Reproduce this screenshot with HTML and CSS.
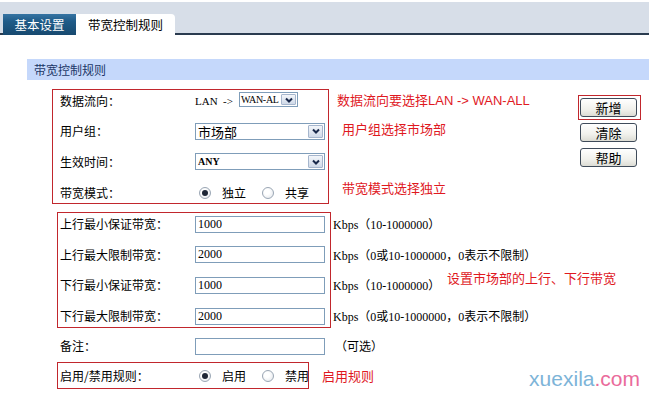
FILE: index.html
```html
<!DOCTYPE html>
<html lang="zh-cn">
<head>
  <meta charset="UTF-8">
  <title>带宽控制规则</title>
  <link rel="stylesheet" href="styles.css">
</head>
<body>

  <div class="topbar">
    <span class="tab tab-dark">基本设置</span>
    <span class="tab tab-active">带宽控制规则</span>
  </div>

  <div class="section-title">带宽控制规则</div>

  <div class="main">
    <div class="form">

      <div class="box box-a">
        <div class="row">
          <span class="label">数据流向：</span>
          <span class="lan">LAN&nbsp;&nbsp;-&gt;</span>
          <span class="select select-small">
            <span class="sel-text latin">WAN-AL</span>
            <span class="arrow"><svg viewBox="0 0 10 10"><path d="M2 3.5 L5 6.5 L8 3.5"/></svg></span>
          </span>
        </div>
        <div class="row">
          <span class="label">用户组：</span>
          <span class="select">
            <span class="sel-text big">市场部</span>
            <span class="arrow"><svg viewBox="0 0 10 10"><path d="M2 3.5 L5 6.5 L8 3.5"/></svg></span>
          </span>
        </div>
        <div class="row">
          <span class="label">生效时间：</span>
          <span class="select">
            <span class="sel-text latin small">ANY</span>
            <span class="arrow"><svg viewBox="0 0 10 10"><path d="M2 3.5 L5 6.5 L8 3.5"/></svg></span>
          </span>
        </div>
        <div class="row">
          <span class="label">带宽模式：</span>
          <span class="radio checked"></span><span class="radio-text">独立</span>
          <span class="radio second"></span><span class="radio-text">共享</span>
        </div>
      </div>

      <div class="box box-b">
        <div class="row row-b">
          <span class="label">上行最小保证带宽：</span>
          <span class="input latin">1000</span>
          <span class="unit">Kbps（10-1000000）</span>
        </div>
        <div class="row row-b">
          <span class="label">上行最大限制带宽：</span>
          <span class="input latin">2000</span>
          <span class="unit">Kbps（0或10-1000000，0表示不限制）</span>
        </div>
        <div class="row row-b">
          <span class="label">下行最小保证带宽：</span>
          <span class="input latin">1000</span>
          <span class="unit">Kbps（10-1000000）</span>
        </div>
        <div class="row row-b">
          <span class="label">下行最大限制带宽：</span>
          <span class="input latin">2000</span>
          <span class="unit">Kbps（0或10-1000000，0表示不限制）</span>
        </div>
      </div>

      <div class="row row-plain">
        <span class="label">备注：</span>
        <span class="input"></span>
        <span class="unit optional">（可选）</span>
      </div>

      <div class="rule-line">
        <div class="box box-c">
          <div class="row row-c">
            <span class="label">启用/禁用规则：</span>
            <span class="radio checked"></span><span class="radio-text">启用</span>
            <span class="radio second"></span><span class="radio-text">禁用</span>
          </div>
        </div>
        <span class="note note-rule">启用规则</span>
      </div>

    </div>

    <div class="notes">
      <div class="note note-1">数据流向要选择<span class="note-latin">LAN -&gt; WAN-ALL</span></div>
      <div class="note note-2">用户组选择市场部</div>
      <div class="note note-3">带宽模式选择独立</div>
      <div class="note note-4">设置市场部的上行、下行带宽</div>
    </div>

    <div class="buttons">
      <div class="btn-mark"><button class="btn">新增</button></div>
      <button class="btn btn-clear">清除</button>
      <button class="btn btn-help">帮助</button>
    </div>
  </div>

  <div class="watermark"><span class="wm-blue">xuexila</span><span class="wm-pink">.com</span></div>

</body>
</html>
```

FILE: styles.css
```css
* {
  box-sizing: border-box;
}

body {
  margin: 0;
  font-family: "Noto Sans CJK SC", sans-serif;
  font-size: 12px;
  color: #000;
  background-color: #fff;
  position: relative;
  height: 395px;
  overflow: hidden;
}

.topbar {
  margin-top: 2px;
  height: 33px;
  background-color: #d7dee8;
  border-bottom: 2px solid #2a3b4f;
  display: flex;
  align-items: flex-end;
  padding-left: 3px;
}

.tab {
  display: block;
  text-align: center;
  font-size: 12.5px;
}

.tab-dark {
  width: 73px;
  height: 21px;
  line-height: 21px;
  margin-bottom: -2px;
  color: #fff;
  background: linear-gradient(#3674a3 0%, #1f5b88 35%, #17496f 100%);
}

.tab-active {
  width: 99px;
  height: 22px;
  line-height: 21px;
  margin-bottom: -3px;
  background-color: #fff;
  border-radius: 0 4px 0 0;
}

.section-title {
  margin-top: 24px;
  margin-left: 27px;
  height: 21px;
  line-height: 21px;
  padding-left: 7px;
  background-color: #c5d8fb;
  color: #1c3767;
}

.main {
  display: flex;
  margin-top: 9px;
  padding-left: 52px;
}

.form {
  width: 285px;
  flex-shrink: 0;
}

.box {
  border: 1px solid #c1272d;
  display: flex;
  flex-direction: column;
}

.box-a {
  width: 277px;
  padding-left: 7px;
  gap: 9.7px;
}

.box-b {
  width: 274px;
  margin-top: 8px;
  margin-left: 5px;
  padding-left: 2px;
  gap: 8.7px;
}

.row {
  display: flex;
  align-items: center;
  height: 21px;
  white-space: nowrap;
}

.row-b {
  height: 22px;
}

.label {
  width: 135px;
  flex-shrink: 0;
  line-height: 16px;
}

.latin {
  font-family: "Liberation Serif", "Noto Sans CJK SC", serif;
}

.lan {
  width: 44px;
  flex-shrink: 0;
  font-family: "Liberation Serif", serif;
  font-size: 11px;
}

.select {
  display: flex;
  align-items: center;
  width: 130px;
  height: 17px;
  border: 1px solid #7f9db9;
  background-color: #fff;
  padding: 1px;
  flex-shrink: 0;
}

.select-small {
  width: 59px;
  height: 15px;
  margin-top: -2px;
}

.sel-text {
  flex: 1;
  padding-left: 1px;
  line-height: 15px;
  white-space: nowrap;
}

.select-small .sel-text {
  font-size: 10px;
  letter-spacing: -0.3px;
  padding-left: 0;
}

.sel-text.big {
  font-size: 13px;
}

.sel-text.small {
  font-size: 10px;
  font-weight: bold;
}

.arrow {
  width: 15px;
  height: 13px;
  display: flex;
  align-items: center;
  justify-content: center;
  background: linear-gradient(#f3f6fa, #cfd9e8);
  border: 1px solid #a6b6cd;
  border-radius: 1px;
  flex-shrink: 0;
}

.select-small .arrow {
  height: 11px;
}

.arrow svg {
  width: 10px;
  height: 10px;
}

.arrow path {
  fill: none;
  stroke: #18284a;
  stroke-width: 2;
}

.radio {
  position: relative;
  width: 12px;
  height: 12px;
  margin-left: 4px;
  border: 1px solid #9aa6b4;
  border-radius: 50%;
  background: radial-gradient(circle at 40% 40%, #fff 30%, #dfe3e8 100%);
  flex-shrink: 0;
}

.radio.checked::after {
  content: "";
  position: absolute;
  left: 2px;
  top: 2px;
  width: 6px;
  height: 6px;
  border-radius: 50%;
  background-color: #1d2636;
}

.radio.second {
  margin-left: 16px;
}

.radio-text {
  margin-left: 11px;
}

.input {
  display: block;
  width: 130px;
  height: 17px;
  border: 1px solid #7f9db9;
  padding-left: 2px;
  line-height: 15px;
  flex-shrink: 0;
}

.unit {
  margin-left: 8px;
  font-family: "Liberation Serif", "Noto Sans CJK SC", serif;
}

.optional {
  margin-left: 10px;
}

.row-plain {
  height: 22px;
  margin-top: 7px;
  padding-left: 8px;
}

.rule-line {
  display: flex;
  align-items: center;
  margin-top: 5px;
  white-space: nowrap;
}

.box-c {
  width: 252px;
  margin-left: 5px;
  padding-left: 2px;
  flex-shrink: 0;
}

.row-c {
  height: 25px;
}

.note {
  color: #e0191f;
  font-size: 13px;
  line-height: 20px;
  white-space: nowrap;
}

.note-latin {
  font-family: "Liberation Sans", sans-serif;
}

.note-rule {
  margin-left: 13px;
}

.notes {
  width: 240px;
  flex-shrink: 0;
}

.note-1 {
  margin-top: 1px;
}

.note-2 {
  margin-top: 8px;
  padding-left: 5px;
}

.note-3 {
  margin-top: 39px;
  padding-left: 5px;
}

.note-4 {
  margin-top: 70px;
  padding-left: 110px;
}

.buttons {
  margin-left: 1px;
  margin-top: 6px;
  display: flex;
  flex-direction: column;
  align-items: flex-start;
}

.btn-mark {
  border: 1px solid #c1272d;
  padding: 2px 3px 2px 1px;
}

.btn {
  display: block;
  width: 57px;
  height: 19px;
  padding: 0;
  border: 1px solid #3f4b5a;
  border-radius: 3px;
  background: linear-gradient(#ffffff, #f1f1ec 60%, #dcdcd4);
  font-family: "Noto Sans CJK SC", sans-serif;
  font-size: 13px;
  line-height: 16px;
  color: #000;
}

.btn-clear {
  margin-top: 3px;
  margin-left: 2px;
}

.btn-help {
  margin-top: 6px;
  margin-left: 2px;
}

.watermark {
  position: absolute;
  right: 9px;
  top: 367px;
  font-family: "Liberation Sans", sans-serif;
  font-size: 21px;
}

.wm-blue {
  color: #7db4d8;
}

.wm-pink {
  color: #ea6b9b;
}
```
